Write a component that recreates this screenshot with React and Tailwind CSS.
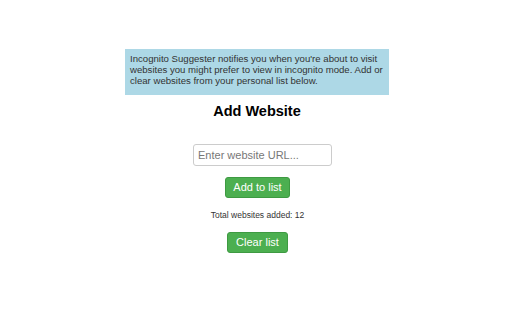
export default function App() {
  return (
    <div className="w-[512px] h-[320px] bg-white flex flex-col items-center" style={{ fontFamily: '"Liberation Sans", Arial, sans-serif' }}>
      <div className="mt-[49px] ml-[2px] w-[264px] h-[46px] bg-[#add8e6] px-[5px] pt-[4px] text-[9.6px] leading-[11px] text-[#333]">
        Incognito Suggester notifies you when you're about to visit websites you might prefer to view in incognito mode. Add or clear websites from your personal list below.
      </div>
      <h3 className="mt-[8px] ml-[2px] text-[14.5px] leading-[17px] font-bold text-black">Add Website</h3>
      <input
        type="text"
        placeholder="Enter website URL..."
        className="mt-[24px] ml-[13px] w-[139px] h-[22px] border border-[#ccc] rounded-[3px] px-[4px] text-[11px] text-[#333] placeholder:text-[#777] outline-none"
      />
      <button className="mt-[11px] ml-[3px] w-[65px] h-[21px] bg-[#4caf50] text-white text-[11px] rounded-[3px] border border-[#3e9a42]">Add to list</button>
      <p className="mt-[12px] ml-[3px] text-[8.5px] leading-[10px] text-[#333]">Total websites added: 12</p>
      <button className="mt-[12px] ml-[3px] w-[61px] h-[21px] bg-[#4caf50] text-white text-[11px] rounded-[3px] border border-[#3e9a42]">Clear list</button>
    </div>
  );
}
